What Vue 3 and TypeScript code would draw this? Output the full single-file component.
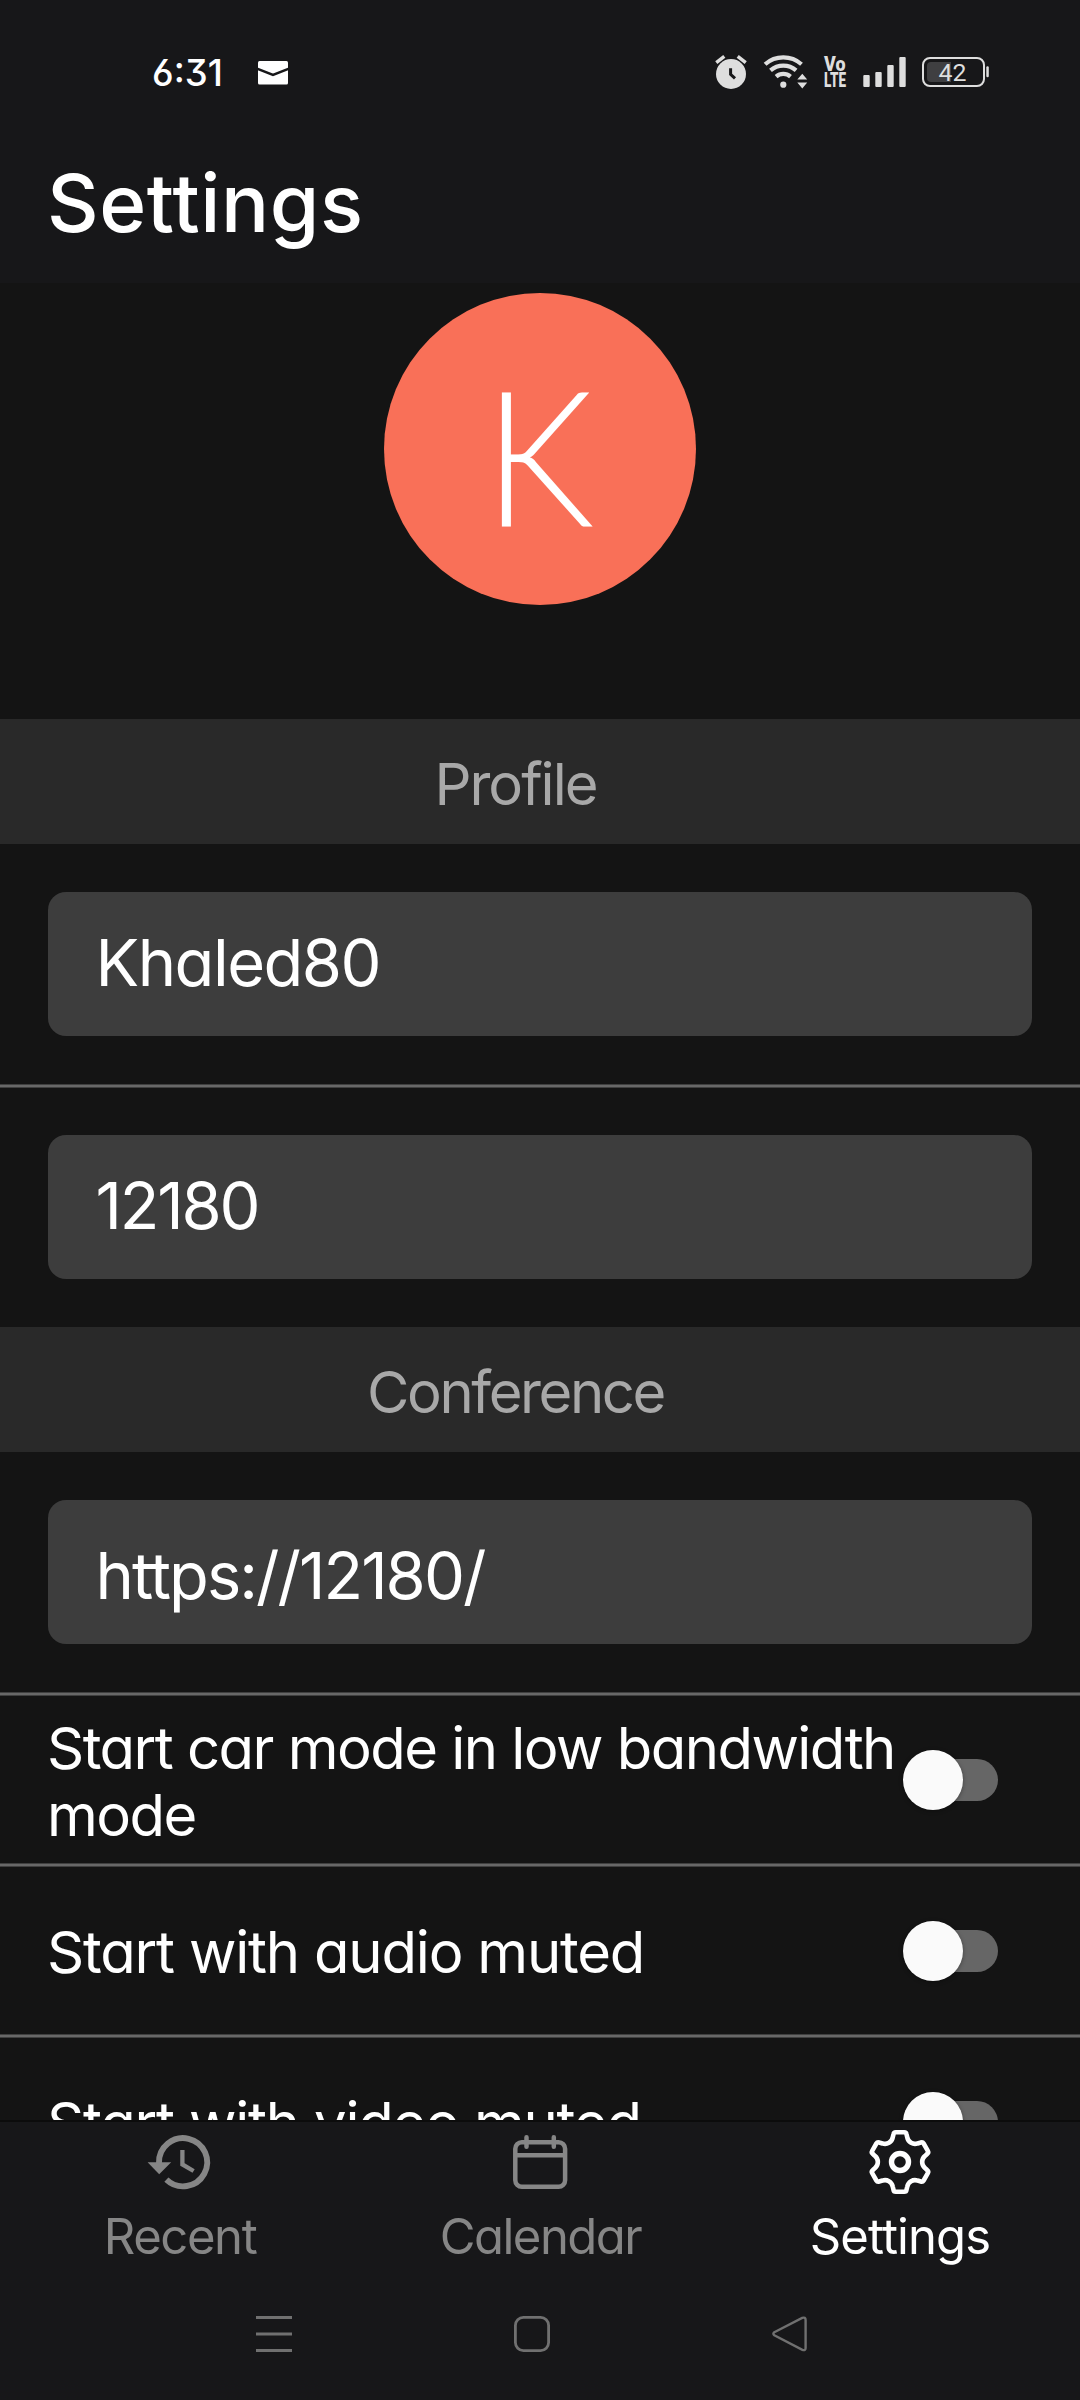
<script setup lang="ts">
import { ref } from 'vue'

interface Toggle {
  label: string
  spacing: string
  on: boolean
}

const displayName = ref('Khaled80')
const email = ref('12180')
const serverUrl = ref('https://12180/')

const toggles = ref<Toggle[]>([
  { label: 'Start car mode in low bandwidth mode', spacing: 'tight', on: false },
  { label: 'Start with audio muted', spacing: 'normal', on: false },
  { label: 'Start with video muted', spacing: 'normal', on: false },
])

/* Outline of a six-toothed cog: one 60 degree section, rotated around the centre. */
function cogPath(cx: number, cy: number): string {
  const section = [
    [4.2, -29.7],
    [6.2, -29.7],
    [6.5, -27.8],
    [7.3, -24.5],
    [8.2, -19.8],
    [13.05, -17],
    [17.57, -18.57],
  ]
  const turned = (x: number, y: number, turn: number): string => {
    const a = (turn * Math.PI) / 3
    const rx = cx + x * Math.cos(a) - y * Math.sin(a)
    const ry = cy + x * Math.sin(a) + y * Math.cos(a)
    return `${rx.toFixed(2)} ${ry.toFixed(2)}`
  }
  let d = `M${turned(-4.2, -29.7, 0)}`
  for (let t = 0; t < 6; t++) {
    const at = (i: number): string => turned(section[i][0], section[i][1], t)
    d += `L${at(0)}Q${at(1)} ${at(2)}L${at(3)}C${at(4)} ${at(5)} ${at(6)}`
    d += `L${turned(-6.5, -27.8, t + 1)}Q${turned(-6.2, -29.7, t + 1)} ${turned(-4.2, -29.7, t + 1)}`
  }
  return d + 'Z'
}

const cog = cogPath(32, 32)
</script>

<template>
  <div class="screen">
    <header class="header">
      <div class="status">
        <span class="clock">6:31</span>
        <svg class="mail" width="30" height="24" viewBox="0 0 30 24">
          <rect width="30" height="23.5" rx="1.5" fill="#fff" />
          <path d="M-1 7.6L15 13.9L31 7.6" fill="none" stroke="#171719" stroke-width="2.6" />
        </svg>
        <div class="status-icons">
          <svg width="32" height="36" viewBox="0 0 32 36">
            <circle cx="16" cy="20" r="15" fill="#dedede" />
            <path d="M1.3 8.7L9.3 2.3M22.7 2.3L30.7 8.7" stroke="#dedede" stroke-width="3.4" />
            <path d="M15.6 14.3V20.3L20 24.4" fill="none" stroke="#171719" stroke-width="3" />
          </svg>
          <svg width="45" height="36" viewBox="0 0 45 36">
            <g fill="none" stroke="#dedede" stroke-width="4.2">
              <path d="M2.1 10.2A27.5 27.5 0 0 1 38.5 10.2" />
              <path d="M7.5 16.4A19.5 19.5 0 0 1 33.1 16.4" />
              <path d="M13.1 22.6A11 11 0 0 1 27.5 22.6" />
            </g>
            <circle cx="20.3" cy="30.7" r="3.1" fill="#dedede" />
            <path d="M34.3 25.5L39.3 19.7L44.2 25.5ZM34.3 28.6L39.3 34.5L44.2 28.6Z" fill="#dedede" />
          </svg>
          <svg class="volte" width="22" height="36" viewBox="0 0 22 36">
            <text x="0" y="17" textLength="21.5" lengthAdjust="spacingAndGlyphs">Vo</text>
            <text x="0" y="32.6" textLength="22" lengthAdjust="spacingAndGlyphs">LTE</text>
          </svg>
          <svg class="signal" width="43" height="36" viewBox="0 0 43 36">
            <g fill="#dedede">
              <rect x="0.3" y="21" width="6.4" height="12" rx="1" />
              <rect x="12.3" y="18" width="6.4" height="15" rx="1" />
              <rect x="24.3" y="11" width="6.4" height="22" rx="1" />
              <rect x="36.3" y="3" width="6.4" height="30" rx="1" />
            </g>
          </svg>
          <svg class="battery" width="67" height="36" viewBox="0 0 67 36">
            <rect x="1" y="4" width="61" height="28" rx="7" fill="none" stroke="#dedede" stroke-width="2" />
            <path d="M9 8H29V28H9Q5 28 5 24V12Q5 8 9 8Z" fill="#3f3f41" />
            <rect x="64.3" y="12.3" width="2.5" height="11" rx="1.2" fill="#dedede" />
            <text x="16.5" y="27" textLength="28" lengthAdjust="spacingAndGlyphs">42</text>
          </svg>
        </div>
      </div>
      <h1 class="title">Settings</h1>
    </header>

    <main class="content">
      <div class="avatar-area">
        <div class="avatar"><span class="initial">K</span></div>
      </div>

      <section>
        <h2 class="section"><span class="profile">Profile</span></h2>
        <div class="field"><span class="name">{{ displayName }}</span></div>
        <div class="divider"></div>
        <div class="field second"><span class="email">{{ email }}</span></div>
      </section>

      <section>
        <h2 class="section"><span class="conference">Conference</span></h2>
        <div class="field url"><span class="server">{{ serverUrl }}</span></div>
        <div class="divider"></div>
        <template v-for="(item, i) in toggles" :key="item.label">
          <div class="row">
            <span class="label" :class="item.spacing">{{ item.label }}</span>
            <span class="switch" :class="{ on: item.on }"><span class="knob"></span></span>
          </div>
          <div v-if="i < toggles.length - 1" class="divider"></div>
        </template>
      </section>
    </main>

    <footer class="footer">
      <nav class="tabs">
        <div class="tab">
          <svg width="64" height="64" viewBox="0 0 64 64">
            <path d="M11 33A24.1 24.1 0 1 1 18.4 49.6" fill="none" stroke="currentColor" stroke-width="5.9" />
            <path d="M-0.4 32.3H23.2L11.2 44.2Z" fill="currentColor" />
            <path d="M34.4 20V34.4L45.6 41" fill="none" stroke="currentColor" stroke-width="4.3" />
          </svg>
          <span class="recent">Recent</span>
        </div>
        <div class="tab">
          <svg width="64" height="64" viewBox="0 0 64 64" fill="none" stroke="currentColor" stroke-width="4.5">
            <rect x="7.3" y="12.2" width="49.8" height="44.6" rx="6.5" />
            <path d="M7.3 25.3H57.1" />
            <path d="M18.5 7.2V16.8M45.8 7.2V16.8" stroke-linecap="round" />
          </svg>
          <span class="calendar">Calendar</span>
        </div>
        <div class="tab active">
          <svg width="64" height="64" viewBox="0 0 64 64" fill="none" stroke="currentColor">
            <path :d="cog" stroke-width="4.6" stroke-linejoin="round" />
            <circle cx="32" cy="32" r="8.5" stroke-width="5.4" />
          </svg>
          <span class="settings">Settings</span>
        </div>
      </nav>
      <div class="system">
        <svg width="36" height="36" viewBox="0 0 36 36">
          <path d="M0 1.5H36M0 18H36M0 34.5H36" stroke="#707070" stroke-width="3" />
        </svg>
        <svg width="36" height="36" viewBox="0 0 36 36">
          <rect x="1.4" y="1.4" width="33.2" height="33.2" rx="8" fill="none" stroke="#707070" stroke-width="2.8" />
        </svg>
        <svg width="36" height="36" viewBox="0 0 36 36">
          <path
            d="M2.3 16.3L30.2 1.9Q33.6 0.8 33.6 4V32Q33.6 35 30.4 33.8L2.3 19.2Q0.4 17.8 2.3 16.3Z"
            fill="none"
            stroke="#707070"
            stroke-width="2.4"
          />
        </svg>
      </div>
    </footer>
  </div>
</template>

<style>
body {
  background: #141414;
}
</style>

<style scoped>
.screen {
  width: 1080px;
  height: 2400px;
  display: flex;
  flex-direction: column;
  overflow: hidden;
  background: #141414;
  color: #fff;
  font-family: Inter, "Liberation Sans", sans-serif;
  font-feature-settings: "cv11", "ss01";
}

svg {
  display: block;
  flex: none;
  overflow: visible;
}

.header {
  flex: none;
  height: 283px;
  background: #171719;
}

.status {
  display: flex;
  align-items: center;
  height: 144px;
  padding: 0 91px 0 152px;
}

.clock {
  width: 72px;
  font-size: 36.5px;
  font-weight: 500;
  line-height: 44px;
  padding-top: 1px;
}

.mail {
  margin-left: 34px;
  margin-top: 2px;
}

.status-icons {
  display: flex;
  align-items: center;
  gap: 16px;
  margin-left: auto;
}

.signal {
  margin-left: 1px;
}

.volte text {
  font: 900 19.4px Roboto, sans-serif;
  fill: #dedede;
}

.battery text {
  font: 400 24.5px Roboto, sans-serif;
  fill: #dedede;
}

.title {
  margin: 11px 0 0 47px;
  font-size: 80px;
  font-weight: 500;
  line-height: 96px;
  letter-spacing: 0.6px;
}

.content {
  flex: 1;
  min-height: 0;
  overflow: hidden;
}

.avatar-area {
  display: flex;
  justify-content: center;
  height: 426px;
  padding-top: 10px;
}

.avatar {
  display: flex;
  justify-content: center;
  box-sizing: border-box;
  width: 312px;
  height: 312px;
  padding: 15px 2px 0 0;
  border-radius: 50%;
  background: #f97058;
}

.initial {
  font-family: Lato, sans-serif;
  font-size: 189px;
  font-weight: 300;
  line-height: 291px;
  transform: scaleX(0.92);
}

.section {
  box-sizing: border-box;
  height: 125px;
  margin: 0;
  padding: 5px 49px 0 0;
  background: #292929;
  color: #a8a8a8;
  font-size: 58px;
  font-weight: 400;
  line-height: 120px;
  text-align: center;
}

.profile {
  letter-spacing: -2px;
}

.conference {
  letter-spacing: -2.4px;
}

.field {
  box-sizing: border-box;
  height: 144px;
  margin: 48px;
  padding: 0 48px 3px 47.5px;
  border-radius: 18px;
  background: #3d3d3d;
  font-size: 65px;
  line-height: 141px;
}

.field.second {
  margin-top: 47px;
}

.field.url {
  padding-top: 8px;
  padding-bottom: 0;
  line-height: 136px;
}

.name {
  letter-spacing: -1.5px;
}

.email {
  letter-spacing: -2.2px;
}

.server {
  letter-spacing: -1.95px;
}

.divider {
  box-sizing: border-box;
  height: 4px;
  border: solid #404040;
  border-width: 1px 0;
  background: #686868;
}

.row {
  display: flex;
  align-items: center;
  box-sizing: border-box;
  height: 167px;
  padding: 0 82px 0 47px;
}

.label {
  flex: 1;
  padding-top: 4px;
  font-size: 58px;
  line-height: 67px;
}

.tight {
  letter-spacing: -1.53px;
}

.normal {
  letter-spacing: -1.2px;
}

.switch {
  display: flex;
  align-items: center;
  flex: none;
  width: 91.5px;
  height: 42px;
  border-radius: 21px;
  background: #666;
}

.knob {
  flex: none;
  width: 60px;
  height: 60px;
  margin-left: -4px;
  border-radius: 50%;
  background: #fafafa;
  box-shadow: 0 1px 4px rgba(0, 0, 0, 0.35);
}

.switch.on {
  justify-content: flex-end;
}

.footer {
  flex: none;
  box-sizing: border-box;
  height: 280px;
  border-top: 2px solid #0c0c0c;
  background: #171719;
}

.tabs {
  display: flex;
  height: 194px;
}

.tab {
  display: flex;
  flex: 1;
  flex-direction: column;
  align-items: center;
  gap: 13px;
  padding-top: 8px;
  color: #868686;
  font-size: 49px;
  line-height: 60px;
}

.tab.active {
  color: #fff;
}

.recent {
  letter-spacing: -1.4px;
}

.calendar {
  padding-left: 1px;
  letter-spacing: -1.5px;
}

.settings {
  letter-spacing: -0.9px;
}

.system {
  display: flex;
  gap: 222px;
  padding-left: 256px;
}
</style>
